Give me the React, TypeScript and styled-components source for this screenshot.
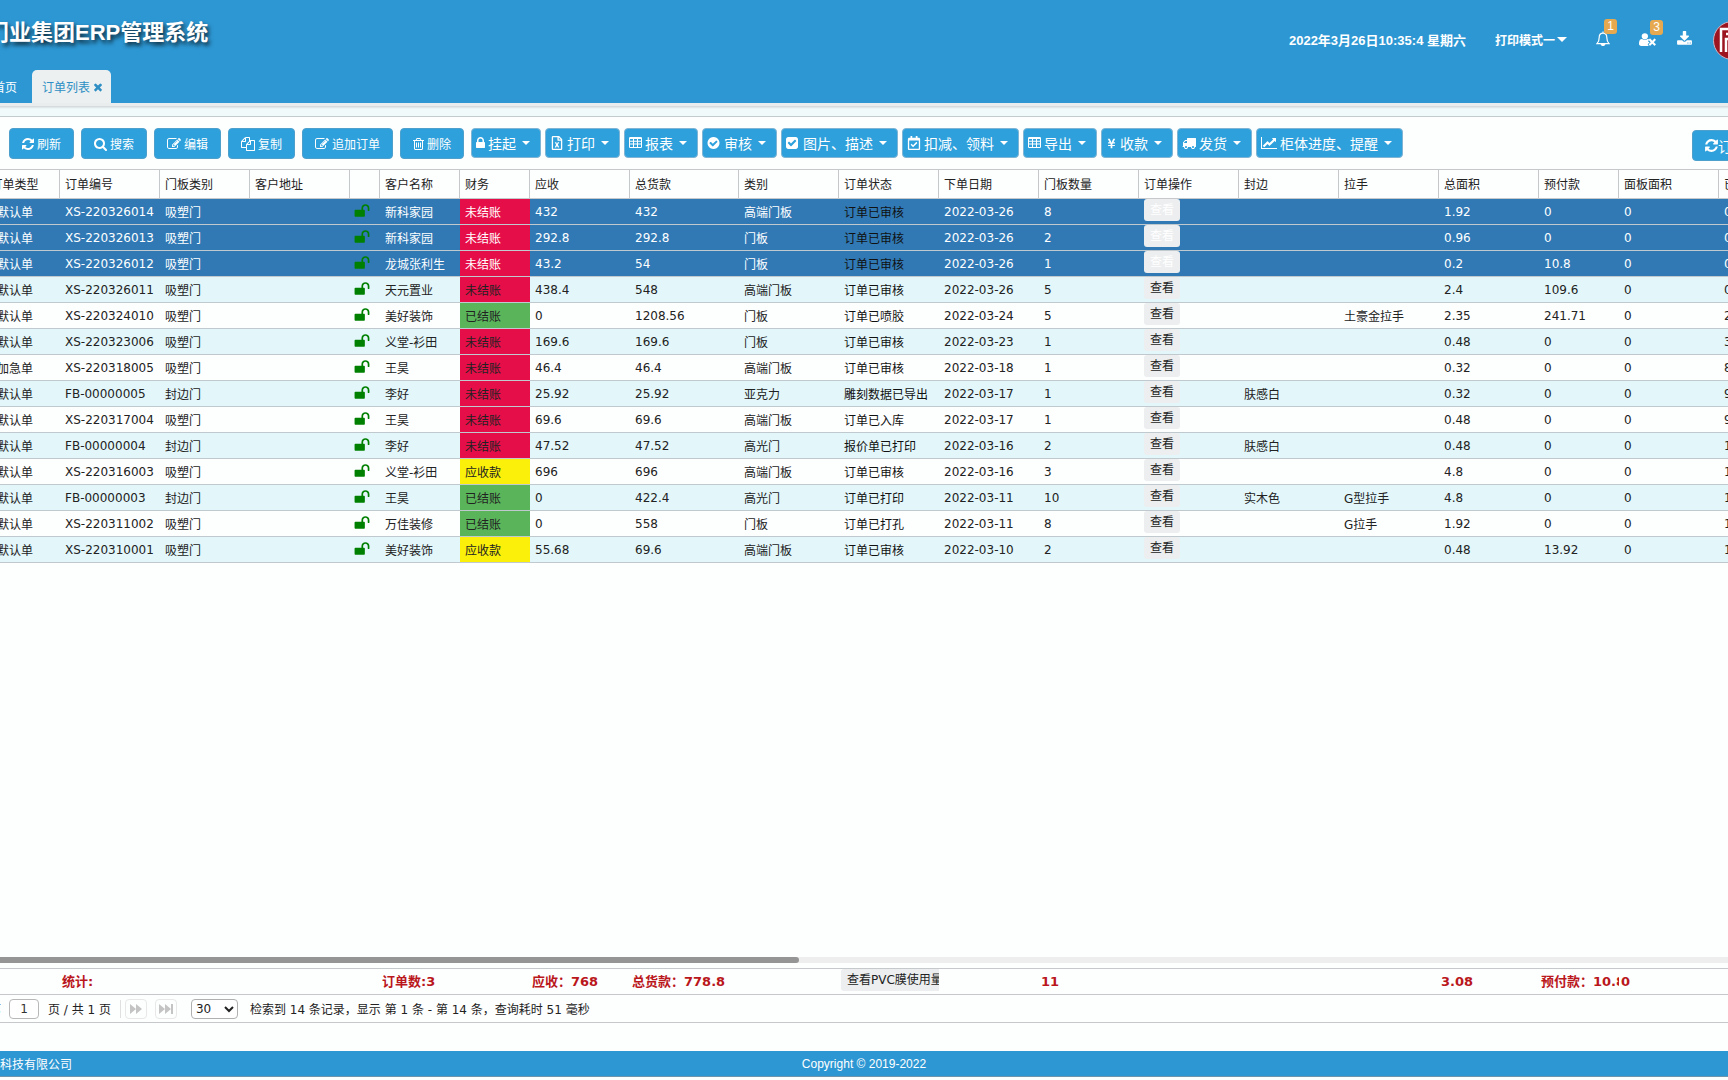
import React from "react";
import styled, { createGlobalStyle, css } from "styled-components";
import { FaRegCalendarCheck, FaRegFileExcel, FaYenSign } from "react-icons/fa";

const GlobalStyle = createGlobalStyle`
  * { box-sizing: border-box; }
  body { margin: 0; background: #fdfefe; }
  button, input, select { font-family: inherit; margin: 0; }
`;

const sans = `"Liberation Sans", "Noto Sans CJK SC", sans-serif`;
const wide = `"DejaVu Sans", "Noto Sans CJK SC", sans-serif`;

/* ---------- icons ---------- */

type Glyph = { x: number; w: number; d: string };

const glyphs: Record<string, Glyph> = {
  refresh: { x: 128, w: 1536, d: "M1639 1056q0 5-1 7-64 268-268 434.5t-478 166.5q-146 0-282.5-55t-243.5-157l-129 129q-19 19-45 19t-45-19-19-45v-448q0-26 19-45t45-19h448q26 0 45 19t19 45-19 45l-137 137q71 66 161 102t187 36q134 0 250-65t186-179q11-17 53-117 8-23 30-23h192q13 0 22.5 9.5t9.5 22.5zm25-800v448q0 26-19 45t-45 19h-448q-26 0-45-19t-19-45 19-45l138-138q-148-137-349-137-134 0-250 65t-186 179q-11 17-53 117-8 23-30 23h-199q-13 0-22.5-9.5t-9.5-22.5v-7q65-268 270-434.5t480-166.5q146 0 284 55.5t245 156.5l130-129q19-19 45-19t45 19 19 45z" },
  search: { x: 64, w: 1664, d: "M1216 832q0-185-131.5-316.5t-316.5-131.5-316.5 131.5-131.5 316.5 131.5 316.5 316.5 131.5 316.5-131.5 131.5-316.5zm512 832q0 52-38 90t-90 38q-54 0-90-38l-343-342q-179 124-399 124-143 0-273.5-55.5t-225-150-150-225-55.5-273.5 55.5-273.5 150-225 225-150 273.5-55.5 273.5 55.5 225 150 150 225 55.5 273.5q0 220-124 399l343 343q37 37 37 90z" },
  edit: { x: 0, w: 1792, d: "M888 1184l116-116-152-152-116 116v56h96v96h56zm440-720q-16-16-33 1l-350 350q-17 17-1 33t33-1l350-350q17-17 1-33zm80 594v190q0 119-84.5 203.5t-203.5 84.5h-832q-119 0-203.5-84.5t-84.5-203.5v-832q0-119 84.5-203.5t203.5-84.5h832q63 0 117 25 15 7 18 23 3 17-9 29l-49 49q-14 14-32 8-23-6-45-6h-832q-66 0-113 47t-47 113v832q0 66 47 113t113 47h832q66 0 113-47t47-113v-126q0-13 9-22l64-64q15-15 35-7t20 29zm-96-738l288 288-672 672h-288v-288zm444 132l-92 92-288-288 92-92q28-28 68-28t68 28l152 152q28 28 28 68t-28 68z" },
  copy: { x: 0, w: 1792, d: "M1696 384q40 0 68 28t28 68v1216q0 40-28 68t-68 28h-960q-40 0-68-28t-28-68v-288h-544q-40 0-68-28t-28-68v-672q0-40 20-88t48-76l408-408q28-28 76-48t88-20h416q40 0 68 28t28 68v328q68-40 128-40h416zm-544 213l-299 299h299v-299zm-640-384l-299 299h299v-299zm196 647l316-316v-416h-384v416q0 40-28 68t-68 28h-416v640h512v-256q0-40 20-88t48-76zm956 804v-1152h-384v416q0 40-28 68t-68 28h-416v640h896z" },
  trash: { x: 192, w: 1408, d: "M704 736v576q0 14-9 23t-23 9h-64q-14 0-23-9t-9-23v-576q0-14 9-23t23-9h64q14 0 23 9t9 23zm256 0v576q0 14-9 23t-23 9h-64q-14 0-23-9t-9-23v-576q0-14 9-23t23-9h64q14 0 23 9t9 23zm256 0v576q0 14-9 23t-23 9h-64q-14 0-23-9t-9-23v-576q0-14 9-23t23-9h64q14 0 23 9t9 23zm128 724v-948h-896v948q0 22 7 40.5t14.5 27 10.5 8.5h832q3 0 10.5-8.5t14.5-27 7-40.5zm-672-1076h448l-48-117q-7-9-17-11h-317q-10 2-17 11zm928 32v64q0 14-9 23t-23 9h-96v948q0 83-47 143.5t-113 60.5h-832q-66 0-113-58.5t-47-141.5v-952h-96q-14 0-23-9t-9-23v-64q0-14 9-23t23-9h309l70-167q15-37 54-63t79-26h320q40 0 79 26t54 63l70 167h309q14 0 23 9t9 23z" },
  lock: { x: 320, w: 1152, d: "M640 768h512v-192q0-106-75-181t-181-75-181 75-75 181v192zm832 96v576q0 40-28 68t-68 28h-960q-40 0-68-28t-28-68v-576q0-40 28-68t68-28h32v-192q0-184 132-316t316-132 316 132 132 316v192h32q40 0 68 28t28 68z" },
  unlock: { x: 0, w: 1792, d: "M1728 576v256q0 26-19 45t-45 19h-64q-26 0-45-19t-19-45v-256q0-106-75-181t-181-75-181 75-75 181v192h96q40 0 68 28t28 68v576q0 40-28 68t-68 28h-960q-40 0-68-28t-28-68v-576q0-40 28-68t68-28h672v-192q0-185 131.5-316.5t316.5-131.5 316.5 131.5 131.5 316.5z" },
  table: { x: 64, w: 1664, d: "M224 128h1344q160 0 160 160v1088q0 160-160 160h-1344q-160 0-160-160v-1088q0-160 160-160zM192 416v160q0 32 32 32h320q32 0 32-32v-192h-352q-32 0-32 32zM704 384v224h384v-224zM1216 384v224h352q32 0 32-32v-192zM192 736v224h384v-224zM704 736v224h384v-224zM1216 736v224h384v-224zM192 1088v288q0 32 32 32h352v-320zM704 1088v320h384v-320zM1216 1088v320h352q32 0 32-32v-288z" },
  checkCircle: { x: 64, w: 1792, d: "M1412 734q0-28-18-46l-91-90q-19-19-45-19t-45 19l-408 407-226-226q-19-19-45-19t-45 19l-91 90q-18 18-18 46 0 27 18 45l362 362q19 19 45 19 27 0 46-19l543-543q18-18 18-45zm252 162q0 209-103 385.5t-279.5 279.5-385.5 103-385.5-103-279.5-279.5-103-385.5 103-385.5 279.5-279.5 385.5-103 385.5 103 279.5 279.5 103 385.5z" },
  checkSquare: { x: 128, w: 1792, d: "M813 1299l614-614q19-19 19-45t-19-45l-102-102q-19-19-45-19t-45 19l-467 467-211-211q-19-19-45-19t-45 19l-102 102q-19 19-19 45t19 45l358 358q19 19 45 19t45-19zm851-883v960q0 119-84.5 203.5t-203.5 84.5h-960q-119 0-203.5-84.5t-84.5-203.5v-960q0-119 84.5-203.5t203.5-84.5h960q119 0 203.5 84.5t84.5 203.5z" },
  truck: { x: 0, w: 1792, d: "M640 1408q0-52-38-90t-90-38-90 38-38 90 38 90 90 38 90-38 38-90zm-384-512h384v-256h-158q-13 0-22 9l-195 195q-9 9-9 22v30zm1280 512q0-52-38-90t-90-38-90 38-38 90 38 90 90 38 90-38 38-90zm256-1088v1024q0 15-4 26.5t-13.5 18.5-16.5 11.5-23.5 6-22.5 2-25.5 0-22.5-.5q0 106-75 181t-181 75-181-75-75-181h-384q0 106-75 181t-181 75-181-75-75-181h-64q-3 0-22.5.5t-25.5 0-22.5-2-23.5-6-16.5-11.5-13.5-18.5-4-26.5q0-26 19-45t45-19v-320q0-8-.5-35t0-38 2.5-34.5 6.5-37 14-30.5 22.5-30l198-198q19-19 50.5-32t58.5-13h160v-192q0-26 19-45t45-19h1024q26 0 45 19t19 45z" },
  chart: { x: 0, w: 2048, d: "M2048 1536v128h-2048v-1536h128v1408h1920zm-128-1248v435q0 21-19.5 29.5t-35.5-7.5l-121-121-633 633q-10 10-23 10t-23-10l-233-233-416 416-192-192 585-585q10-10 23-10t23 10l233 233 464-464-121-121q-16-16-7.5-35.5t29.5-19.5h435q14 0 23 9t9 23z" },
  download: { x: 64, w: 1664, d: "M1344 1344q0-26-19-45t-45-19-45 19-19 45 19 45 45 19 45-19 19-45zm256 0q0-26-19-45t-45-19-45 19-19 45 19 45 45 19 45-19 19-45zm128-224v320q0 40-28 68t-68 28h-1472q-40 0-68-28t-28-68v-320q0-40 28-68t68-28h465l135 136q58 56 136 56t136-56l136-136h464q40 0 68 28t28 68zm-325-569q17 41-14 70l-448 448q-18 19-45 19t-45-19l-448-448q-31-29-14-70 17-39 59-39h256v-448q0-26 19-45t45-19h256q26 0 45 19t19 45v448h256q42 0 59 39z" },
  userTimes: { x: 0, w: 2048, d: "M704 896q-159 0-271.5-112.5t-112.5-271.5 112.5-271.5 271.5-112.5 271.5 112.5 112.5 271.5-112.5 271.5-271.5 112.5zm1077 320l249 249q9 9 9 23 0 13-9 22l-136 136q-9 9-22 9-14 0-23-9l-249-249-249 249q-9 9-23 9-13 0-22-9l-136-136q-9-9-9-22 0-14 9-23l249-249-249-249q-9-9-9-23 0-13 9-22l136-136q9-9 22-9 14 0 23 9l249 249 249-249q9-9 23-9 13 0 22 9l136 136q9 9 9 22 0 14-9 23zm-498 0l-181 181q-37 37-37 91 0 53 37 90l83 83q-21 3-44 3h-874q-121 0-194-69t-73-190q0-53 3.500-103.500t14-109 26.500-108.500 43-97.500 62-81 85.500-53.500 111.500-20q19 0 39 17 79 61 154.500 91.500t164.500 30.500 164.500-30.500 154.500-91.500q20-17 39-17 129 0 215 92-50 4-87 41l-40 40q-37 37-37 90 0 54 37 91z" },
  times: { x: 302, w: 1188, d: "M1490 1322q0 40-28 68l-136 136q-28 28-68 28t-68-28l-294-294-294 294q-28 28-68 28t-68-28l-136-136q-28-28-28-68t28-68l294-294-294-294q-28-28-28-68t28-68l136-136q28-28 68-28t68 28l294 294 294-294q28-28 68-28t68 28l136 136q28 28 28 68t-28 68l-294 294 294 294q28 28 28 68z" },
};

function Icon({ name, size = 14 }: { name: string; size?: number }) {
  if (name === "excel") return <FaRegFileExcel size={size} aria-hidden />;
  if (name === "calendar") return <FaRegCalendarCheck size={size} aria-hidden />;
  if (name === "yen") return <FaYenSign size={size - 3} aria-hidden />;
  const g = glyphs[name];
  return (
    <svg
      width={Math.round((size * g.w) / 1792)}
      height={size}
      viewBox={`${g.x} 0 ${g.w} 1792`}
      fill="currentColor"
      fillRule={name === "table" ? "evenodd" : "nonzero"}
      aria-hidden
    >
      <path d={g.d} />
    </svg>
  );
}

function Bell() {
  return (
    <svg width="14" height="16" viewBox="0 0 14 16" fill="none" stroke="currentColor" strokeWidth="1.2" aria-hidden>
      <path d="M7 .5V2M1 12.600H13C11 10.500 10.800 8.500 10.800 6.500C10.800 4 9.500 2.200 7 2.200S3.200 4 3.200 6.500C3.200 8.500 3 10.500 1 12.600Z" />
      <path d="M5.300 13.200A1.800 1.800 0 0 0 8.700 13.200Z" fill="currentColor" />
    </svg>
  );
}

/* ---------- page frame ---------- */

const Page = styled.div`
  display: flex;
  flex-direction: column;
  min-height: 100vh;
  padding-bottom: 3px;
  overflow: hidden;
  font-family: ${wide};
  font-size: 12px;
  color: #222;
`;

const Header = styled.header`
  display: flex;
  flex-direction: column;
  justify-content: space-between;
  height: 103px;
  background: #2d97d3;
  color: #fff;
  font-family: ${sans};
`;

const HeaderTop = styled.div`
  display: flex;
  justify-content: space-between;
  height: 66px;
`;

const Brand = styled.h1`
  margin: 0 0 0 -13px;
  font-size: 22px;
  line-height: 66px;
  font-weight: bold;
  white-space: nowrap;
  text-shadow: 2px 3px 4px rgba(0, 0, 0, 0.75);
`;

const HeaderTools = styled.div`
  display: flex;
  align-items: center;
  flex: none;
  height: 78px;
  margin-right: -24px;
  font-weight: bold;
`;

const Clock = styled.time`
  font-size: 13px;
  margin-right: 29px;
`;

const HeaderButton = styled.button<{ $gap?: number }>`
  position: relative;
  display: flex;
  align-items: center;
  gap: 2px;
  padding: 0;
  margin-right: ${(p) => p.$gap ?? 21}px;
  border: 0;
  background: none;
  color: inherit;
  font-size: 12px;
  font-weight: bold;
`;

const Badge = styled.span`
  position: absolute;
  top: -12px;
  right: -7px;
  width: 13px;
  border-radius: 3px;
  background: #e6a94f;
  font-size: 12px;
  font-weight: normal;
  line-height: 15px;
  text-align: center;
`;

const Caret = styled.span<{ $size?: number }>`
  border: ${(p) => p.$size ?? 4}px solid transparent;
  border-top-color: currentColor;
  border-bottom: 0;
`;

const Tabs = styled.nav`
  display: flex;
  margin-left: -17px;
`;

const Tab = styled.a<{ $active?: boolean }>`
  display: flex;
  align-items: center;
  gap: 4px;
  height: 33px;
  padding: 0 10px;
  margin-right: 5px;
  border-radius: 5px 5px 0 0;
  color: #fff;
  text-decoration: none;
  ${(p) => p.$active && css`
    background: #ecf0f1;
    color: #2f8fc4;
    padding-right: 9px;
  `}
`;

const Ledge = styled.div`
  height: 14px;
  border-top: 3px solid #e9edee;
  border-bottom: 1px solid #c3cbcc;
  background: linear-gradient(#cfd6d8, #f1fafa 3px);
`;

/* ---------- toolbar ---------- */

const Toolbar = styled.div`
  display: flex;
  align-items: flex-start;
  height: 52px;
  padding: 11px 0 0 9px;
`;

const Group = styled.div<{ $gap: number }>`
  display: flex;
  flex: none;
  gap: ${(p) => p.$gap}px;
  margin-right: 7px;
`;

const Action = styled.button`
  display: flex;
  align-items: center;
  justify-content: center;
  flex: none;
  gap: 3px;
  height: 31px;
  padding: 0 12px;
  border: 1px solid #4d9fcc;
  border-radius: 4px;
  background: #2ea1dc;
  color: #fff;
  font-size: 12px;
  white-space: nowrap;
`;

const MenuAction = styled(Action)`
  height: 30px;
  padding: 0 10px 0 4px;
  border-color: #7fb4d4;
  font-size: 14px;
  & ${Caret} { margin-left: 3px; }
`;

const SideAction = styled(Action)`
  gap: 0;
  margin: 2px -59px 0 auto;
  font-size: 14px;
`;

/* ---------- grid ---------- */

const GridArea = styled.main`
  flex: 1;
  overflow: hidden;
`;

const Grid = styled.table`
  table-layout: fixed;
  border-collapse: separate;
  border-spacing: 0;
  width: 1849px;
  margin-left: -30px;
`;

const cell = css`
  padding: 0 0 0 5px;
  overflow: hidden;
  white-space: nowrap;
  text-align: left;
  font-weight: normal;
  &:first-child { text-align: center; padding-left: 0; }
`;

const HeadCell = styled.th`
  ${cell}
  height: 30px;
  padding-bottom: 2px;
  border: solid #c5c9cb;
  border-width: 1px 1px 1px 0;
`;

const Row = styled.tr<{ $selected: boolean }>`
  background: #fdfefe;
  &:nth-child(even) { background: #e3f7fa; }
  ${(p) => p.$selected && css`
    &&, &&:nth-child(even) { background: #3079b5; color: #fff; }
  `}
`;

const fills: Record<string, string> = { 未结账: "#e60e49", 已结账: "#5ab55a", 应收款: "#faf00a" };

const Cell = styled.td<{ $fill?: string; $dark?: boolean }>`
  ${cell}
  height: 26px;
  border-bottom: 1px solid #bfc9ce;
  vertical-align: middle;
  ${(p) => p.$fill && css`background: ${p.$fill};`}
  ${(p) => p.$dark && css`color: #111;`}
  & > svg { display: block; color: #008000; margin: 0 0 2px -1px; }
`;

const ViewButton = styled.button`
  display: block;
  flex: none;
  height: 22px;
  padding: 0 6px;
  margin-bottom: 3px;
  border: 0;
  border-radius: 3px;
  background: #eceeef;
  color: inherit;
  font-size: 12px;
  line-height: 20px;
  white-space: nowrap;
`;

const ScrollTrack = styled.div`
  flex: none;
  height: 6px;
  margin-bottom: 5px;
  background: #eeeeee;
`;

const ScrollThumb = styled.div`
  width: 799px;
  height: 6px;
  border-radius: 0 3px 3px 0;
  background: #959595;
`;

const Summary = styled.div`
  display: grid;
  grid-template-columns: 60px 320px 150px 100px 209px 100px 100px 400px 100px 80px 1fr;
  height: 26px;
  border-top: 1px solid #c5c9cb;
  color: #ba171c;
  font-size: 13px;
  font-weight: bold;
  line-height: 25px;
  & ${ViewButton} { color: #222; }
`;

const SummaryCell = styled.div`
  padding-left: 2px;
  overflow: hidden;
  white-space: nowrap;
`;

const Pager = styled.div`
  display: flex;
  align-items: center;
  height: 29px;
  padding-right: 20px;
  margin-bottom: 28px;
  border: solid #c5c9cb;
  border-width: 1px 0;
`;

const PageLabel = styled.label`
  display: flex;
  align-items: center;
  gap: 8px;
  margin-left: -11px;
`;

const PageInput = styled.input`
  width: 30px;
  height: 20px;
  padding: 0;
  border: 1px solid #b8b8b8;
  border-radius: 4px;
  background: #fff;
  color: #333;
  font-size: 12px;
  text-align: center;
`;

const PagerText = styled.span<{ $gap?: number }>`
  margin-left: ${(p) => p.$gap ?? 9}px;
  white-space: nowrap;
`;

const PagerDivider = styled.span`
  width: 1px;
  height: 18px;
  margin: 0 -4px 0 9px;
  background: #e0e0e0;
`;

const PagerButton = styled.button`
  display: grid;
  place-items: center;
  width: 22px;
  height: 20px;
  padding: 0;
  margin-left: 8px;
  border: 1px solid #e8e8e8;
  border-radius: 4px;
  background: none;
  color: #c4c4c4;
`;

const PageSize = styled.select`
  width: 47px;
  height: 20px;
  padding: 0;
  margin-left: 14px;
  border: 1px solid #b0b0b0;
  border-radius: 4px;
  background: #fff;
  color: #222;
  font-size: 12px;
`;

const Footer = styled.footer`
  display: grid;
  grid-template-columns: 1fr auto 1fr;
  align-items: center;
  height: 26px;
  border-bottom: 1px solid #6f95ab;
  background: #2d97d3;
  color: #fff;
  font-family: ${sans};
  font-size: 12px;
`;

/* ---------- data ---------- */

const columns: [string, number][] = [
  ["订单类型", 90], ["订单编号", 100], ["门板类别", 90], ["客户地址", 100], ["", 30], ["客户名称", 80],
  ["财务", 70], ["应收", 100], ["总货款", 109], ["类别", 100], ["订单状态", 100], ["下单日期", 100],
  ["门板数量", 100], ["订单操作", 100], ["封边", 100], ["拉手", 100], ["总面积", 100], ["预付款", 80],
  ["面板面积", 100], ["已收款", 100],
];

type Order = {
  kind: string; no: string; door: string; customer: string; finance: string; due: string; total: string;
  category: string; state: string; date: string; count: string; edge: string; handle: string;
  area: string; prepaid: string; panel: string; paid: string;
};

const keys: (keyof Order)[] = [
  "kind", "no", "door", "customer", "finance", "due", "total", "category", "state", "date", "count",
  "edge", "handle", "area", "prepaid", "panel", "paid",
];

const orders: Order[] = [
  "默认单|XS-220326014|吸塑门|新科家园|未结账|432|432|高端门板|订单已审核|2022-03-26|8|||1.92|0|0|0",
  "默认单|XS-220326013|吸塑门|新科家园|未结账|292.8|292.8|门板|订单已审核|2022-03-26|2|||0.96|0|0|0",
  "默认单|XS-220326012|吸塑门|龙城张利生|未结账|43.2|54|门板|订单已审核|2022-03-26|1|||0.2|10.8|0|0",
  "默认单|XS-220326011|吸塑门|天元置业|未结账|438.4|548|高端门板|订单已审核|2022-03-26|5|||2.4|109.6|0|0",
  "默认单|XS-220324010|吸塑门|美好装饰|已结账|0|1208.56|门板|订单已喷胶|2022-03-24|5||土豪金拉手|2.35|241.71|0|2",
  "默认单|XS-220323006|吸塑门|义堂-衫田|未结账|169.6|169.6|门板|订单已审核|2022-03-23|1|||0.48|0|0|3",
  "加急单|XS-220318005|吸塑门|王昊|未结账|46.4|46.4|高端门板|订单已审核|2022-03-18|1|||0.32|0|0|8",
  "默认单|FB-00000005|封边门|李好|未结账|25.92|25.92|亚克力|雕刻数据已导出|2022-03-17|1|肤感白||0.32|0|0|9",
  "默认单|XS-220317004|吸塑门|王昊|未结账|69.6|69.6|高端门板|订单已入库|2022-03-17|1|||0.48|0|0|9",
  "默认单|FB-00000004|封边门|李好|未结账|47.52|47.52|高光门|报价单已打印|2022-03-16|2|肤感白||0.48|0|0|1",
  "默认单|XS-220316003|吸塑门|义堂-衫田|应收款|696|696|高端门板|订单已审核|2022-03-16|3|||4.8|0|0|1",
  "默认单|FB-00000003|封边门|王昊|已结账|0|422.4|高光门|订单已打印|2022-03-11|10|实木色|G型拉手|4.8|0|0|1",
  "默认单|XS-220311002|吸塑门|万佳装修|已结账|0|558|门板|订单已打孔|2022-03-11|8||G拉手|1.92|0|0|1",
  "默认单|XS-220310001|吸塑门|美好装饰|应收款|55.68|69.6|高端门板|订单已审核|2022-03-10|2|||0.48|13.92|0|1",
].map((line) => {
  const parts = line.split("|");
  return Object.fromEntries(keys.map((k, i) => [k, parts[i]])) as Order;
});

const actions = [["refresh", "刷新"], ["search", "搜索"], ["edit", "编辑"], ["copy", "复制"], ["edit", "追加订单"], ["trash", "删除"]];

const menus = [
  ["lock", "挂起"], ["excel", "打印"], ["table", "报表"], ["checkCircle", "审核"], ["checkSquare", "图片、描述"],
  ["calendar", "扣减、领料"], ["table", "导出"], ["yen", "收款"], ["truck", "发货"], ["chart", "柜体进度、提醒"],
];

const summary = ["", "统计:", "订单数:3", "应收：768", "总货款：778.8"];

function OrderRow({ order, selected }: { order: Order; selected: boolean }) {
  return (
    <Row $selected={selected}>
      <Cell>{order.kind}</Cell>
      <Cell>{order.no}</Cell>
      <Cell>{order.door}</Cell>
      <Cell />
      <Cell><Icon name="unlock" size={16} /></Cell>
      <Cell>{order.customer}</Cell>
      <Cell $fill={fills[order.finance]}>{order.finance}</Cell>
      <Cell>{order.due}</Cell>
      <Cell>{order.total}</Cell>
      <Cell>{order.category}</Cell>
      <Cell $dark>{order.state}</Cell>
      <Cell>{order.date}</Cell>
      <Cell>{order.count}</Cell>
      <Cell><ViewButton type="button">查看</ViewButton></Cell>
      <Cell>{order.edge}</Cell>
      <Cell>{order.handle}</Cell>
      <Cell>{order.area}</Cell>
      <Cell>{order.prepaid}</Cell>
      <Cell>{order.panel}</Cell>
      <Cell>{order.paid}</Cell>
    </Row>
  );
}

function Logo() {
  return (
    <svg width="39" height="41" viewBox="0 -2 39 41" aria-hidden>
      <circle cx="19.5" cy="19.5" r="19" fill="#9b1420" stroke="#c9b4c4" />
      <g fill="none" stroke="#fff" strokeWidth="2.5">
        <path d="M8 31V8H31V31M13 13H27M13 31V18H27V31M20 18V31" />
      </g>
    </svg>
  );
}

export default function App() {
  return (
    <Page>
      <GlobalStyle />
      <Header>
        <HeaderTop>
          <Brand>门业集团ERP管理系统</Brand>
          <HeaderTools>
            <Clock>2022年3月26日10:35:4 星期六</Clock>
            <HeaderButton type="button" $gap={29}>打印模式一<Caret $size={5} /></HeaderButton>
            <HeaderButton type="button" $gap={29} aria-label="通知"><Bell /><Badge>1</Badge></HeaderButton>
            <HeaderButton type="button" aria-label="用户"><Icon name="userTimes" size={15} /><Badge>3</Badge></HeaderButton>
            <HeaderButton type="button" aria-label="下载"><Icon name="download" size={16} /></HeaderButton>
            <Logo />
          </HeaderTools>
        </HeaderTop>
        <Tabs>
          <Tab href="#home">首页</Tab>
          <Tab href="#orders" $active>订单列表<Icon name="times" size={12} /></Tab>
        </Tabs>
      </Header>
      <Ledge />
      <Toolbar>
        <Group $gap={7}>
          {actions.map(([icon, label]) => (
            <Action type="button" key={label}><Icon name={icon} />{label}</Action>
          ))}
        </Group>
        <Group $gap={4}>
          {menus.map(([icon, label]) => (
            <MenuAction type="button" key={label}><Icon name={icon} />{label}<Caret /></MenuAction>
          ))}
        </Group>
        <SideAction type="button"><Icon name="refresh" size={15} />订单刷新</SideAction>
      </Toolbar>
      <GridArea>
        <Grid>
          <colgroup>{columns.map(([name, w]) => <col key={name} width={w} />)}</colgroup>
          <thead>
            <tr>{columns.map(([name]) => <HeadCell key={name} scope="col">{name}</HeadCell>)}</tr>
          </thead>
          <tbody>
            {orders.map((order, i) => <OrderRow key={order.no} order={order} selected={i < 3} />)}
          </tbody>
        </Grid>
      </GridArea>
      <ScrollTrack><ScrollThumb /></ScrollTrack>
      <Summary>
        {summary.map((text) => <SummaryCell key={text}>{text}</SummaryCell>)}
        <SummaryCell><ViewButton type="button">查看PVC膜使用量</ViewButton></SummaryCell>
        <SummaryCell />
        <SummaryCell>11</SummaryCell>
        <SummaryCell>3.08</SummaryCell>
        <SummaryCell>预付款：10.8</SummaryCell>
        <SummaryCell>0</SummaryCell>
      </Summary>
      <Pager>
        <PageLabel>第<PageInput type="text" defaultValue="1" /></PageLabel>
        <PagerText>页 / 共 1 页</PagerText>
        <PagerDivider />
        <PagerButton type="button" aria-label="下一页">
          <svg width="12" height="10" viewBox="0 0 12 10" fill="currentColor"><path d="M0 0L6 5L0 10ZM6 0L12 5L6 10Z" /></svg>
        </PagerButton>
        <PagerButton type="button" aria-label="末页">
          <svg width="14" height="10" viewBox="0 0 14 10" fill="currentColor"><path d="M0 0L6 5L0 10ZM6 0L12 5L6 10ZM12 0H14V10H12Z" /></svg>
        </PagerButton>
        <PageSize defaultValue="30" aria-label="每页条数">
          <option>30</option>
          <option>50</option>
        </PageSize>
        <PagerText $gap={12}>检索到 14 条记录，显示 第 1 条 - 第 14 条，查询耗时 51 毫秒</PagerText>
      </Pager>
      <Footer>
        <span>科技有限公司</span>
        <span>Copyright © 2019-2022</span>
      </Footer>
    </Page>
  );
}
